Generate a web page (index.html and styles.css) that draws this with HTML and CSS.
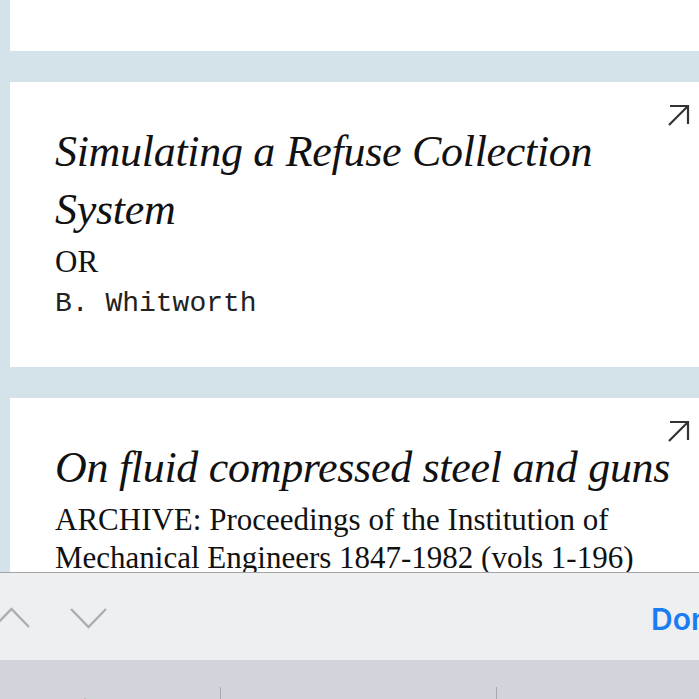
FILE: index.html
```html
<!DOCTYPE html>
<html lang="en">
<head>
<meta charset="utf-8">
<title>Results</title>
<link rel="stylesheet" href="styles.css">
</head>
<body>
<main class="feed">
  <article class="card card-stub"></article>
  <article class="card">
    <svg class="ext" viewBox="0 0 24 24" width="24" height="24" aria-hidden="true"><path d="M2 21 L21 2 M3 2 H21 V20" fill="none" stroke="#333" stroke-width="2.2"/></svg>
    <h2 class="title">Simulating a Refuse Collection System</h2>
    <p class="source">OR</p>
    <p class="author">B. Whitworth</p>
  </article>
  <article class="card">
    <svg class="ext" viewBox="0 0 24 24" width="24" height="24" aria-hidden="true"><path d="M2 21 L21 2 M3 2 H21 V20" fill="none" stroke="#333" stroke-width="2.2"/></svg>
    <h2 class="title">On fluid compressed steel and guns</h2>
    <p class="source">ARCHIVE: Proceedings of the Institution of Mechanical Engineers 1847-1982 (vols 1-196)</p>
  </article>
</main>
<div class="keyboard">
  <div class="accessory">
    <div class="nav">
      <svg class="chev up" viewBox="0 0 40 24" width="40" height="24" aria-hidden="true"><path d="M2 21 L19.5 3 L37 21" fill="none" stroke="#acaeb2" stroke-width="2.4"/></svg>
      <svg class="chev" viewBox="0 0 40 24" width="40" height="24" aria-hidden="true"><path d="M2 3 L19.5 21 L37 3" fill="none" stroke="#acaeb2" stroke-width="2.4"/></svg>
    </div>
    <span class="done">Done</span>
  </div>
  <div class="suggest">
    <div class="slot first"><span>Whitworth</span></div>
    <div class="sep"></div>
    <div class="slot mid"></div>
    <div class="sep"></div>
    <div class="slot"></div>
  </div>
</div>
</body>
</html>
```
FILE: styles.css
```css
html, body {
  margin: 0;
  padding: 0;
}
body {
  background: #d4e3ea;
  width: 699px;
  height: 699px;
  overflow: hidden;
  position: relative;
}
.feed {
  display: flex;
  flex-direction: column;
  gap: 31px;
  padding-left: 10px;
  width: 740px;
}
.card {
  background: #ffffff;
  position: relative;
  padding: 41px 60px 45px 45px;
}
.card-stub {
  height: 51px;
  padding: 0;
}
.ext {
  position: absolute;
  left: 657px;
  top: 22px;
}
.title {
  margin: 0;
  font-family: "Liberation Serif", "Times New Roman", serif;
  font-style: italic;
  font-weight: normal;
  font-size: 44px;
  line-height: 58px;
  color: #111;
  width: 640px;
  letter-spacing: -0.3px;
}
.source {
  margin: 4px 0 0;
  font-family: "Liberation Serif", "Times New Roman", serif;
  font-size: 31px;
  line-height: 38px;
  color: #111;
  width: 600px;
}
.author {
  margin: 5px 0 0;
  font-family: "Liberation Mono", "Courier New", monospace;
  font-size: 28px;
  line-height: 36px;
  color: #222;
}
.keyboard {
  position: absolute;
  left: 0;
  top: 572px;
  width: 699px;
  height: 127px;
  display: flex;
  flex-direction: column;
}
.accessory {
  height: 87px;
  background: #eeeff1;
  border-top: 1px solid #a4a4a6;
  display: flex;
  align-items: center;
  justify-content: space-between;
  overflow: hidden;
}
.nav {
  display: flex;
  gap: 37px;
  margin-left: -8px;
  margin-top: 2px;
}
.chev {
  display: block;
}
.done {
  font-family: Inter, "Liberation Sans", sans-serif;
  font-weight: 600;
  font-size: 30px;
  color: #1a7cf3;
  margin-right: -40px;
  margin-top: 4px;
  white-space: nowrap;
  width: 88px;
}
.suggest {
  flex: 1;
  background: #d1d4da;
  display: flex;
  overflow: hidden;
}
.slot {
  height: 39px;
}
.slot.first {
  width: 220px;
  padding-left: 34px;
  box-sizing: border-box;
}
.slot.first span {
  display: block;
  font-family: Inter, "Liberation Sans", sans-serif;
  font-size: 30px;
  line-height: 36px;
  margin-top: 33px;
  color: #111;
}
.slot.mid {
  width: 275px;
}
.sep {
  width: 1px;
  height: 20px;
  margin-top: 27px;
  background: #a7a9ae;
}
```
